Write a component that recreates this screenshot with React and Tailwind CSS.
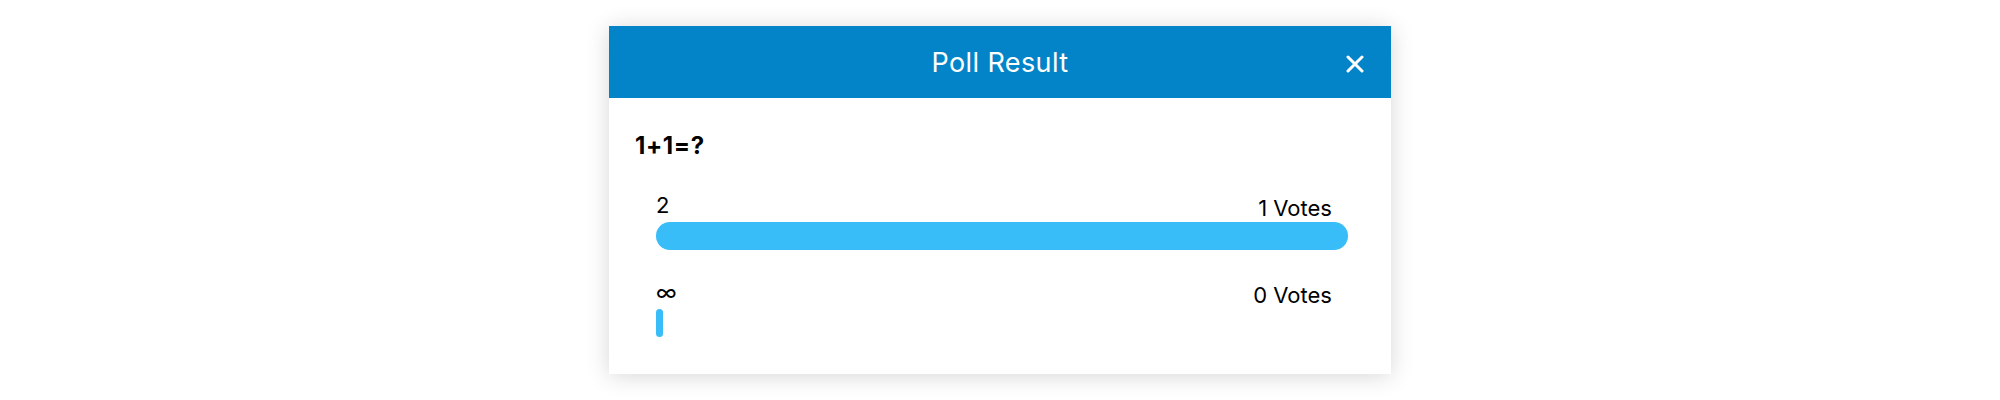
import React from "react";

const options = [
  { label: "2", votes: 1 },
  { label: "∞", votes: 0 },
];

export default function App() {
  const total = options.reduce((s, o) => s + o.votes, 0) || 1;
  return (
    <div className="w-[2000px] h-[400px] bg-white flex justify-center pt-[26px]" style={{ fontFamily: "Inter, 'Noto Sans', sans-serif" }}>
      <div className="w-[782px] h-[348px] bg-white shadow-[0_2px_22px_rgba(0,0,0,0.16)] flex flex-col">
        <div className="relative h-[72px] bg-[#0384c8] flex items-center justify-center">
          <span className="text-white text-[27px] leading-none tracking-[0.4px]">Poll Result</span>
          <button className="absolute right-[27px] top-[29px] w-[18px] h-[18px] flex items-center justify-center">
            <svg width="18" height="18" viewBox="0 0 18 18">
              <path d="M2 2L16 16M16 2L2 16" stroke="white" strokeWidth="3" strokeLinecap="round" />
            </svg>
          </button>
        </div>
        <div className="flex flex-col pt-[36px] px-[26px]">
          <div className="text-[24px] leading-none font-bold text-black tracking-[0.6px]">1+1=?</div>
          <div className="flex flex-col ml-[21px] mr-[17px] mt-[36px] gap-[31px]">
            {options.map((o, i) => (
              <div key={i} className="flex flex-col">
                <div className="flex justify-between items-start h-[21px] text-[22px] leading-none text-black">
                  <span>{o.label}</span>
                  <span className="mt-[3px] pr-[16px] text-[22px]">{o.votes} Votes</span>
                </div>
                <div className="mt-[7px] h-[28px]">
                  <div
                    className="h-[28px] rounded-full bg-[#38bdf8] min-w-[7px]"
                    style={{ width: o.votes ? `${(o.votes / total) * 100}%` : "7px" }}
                  />
                </div>
              </div>
            ))}
          </div>
        </div>
      </div>
    </div>
  );
}
